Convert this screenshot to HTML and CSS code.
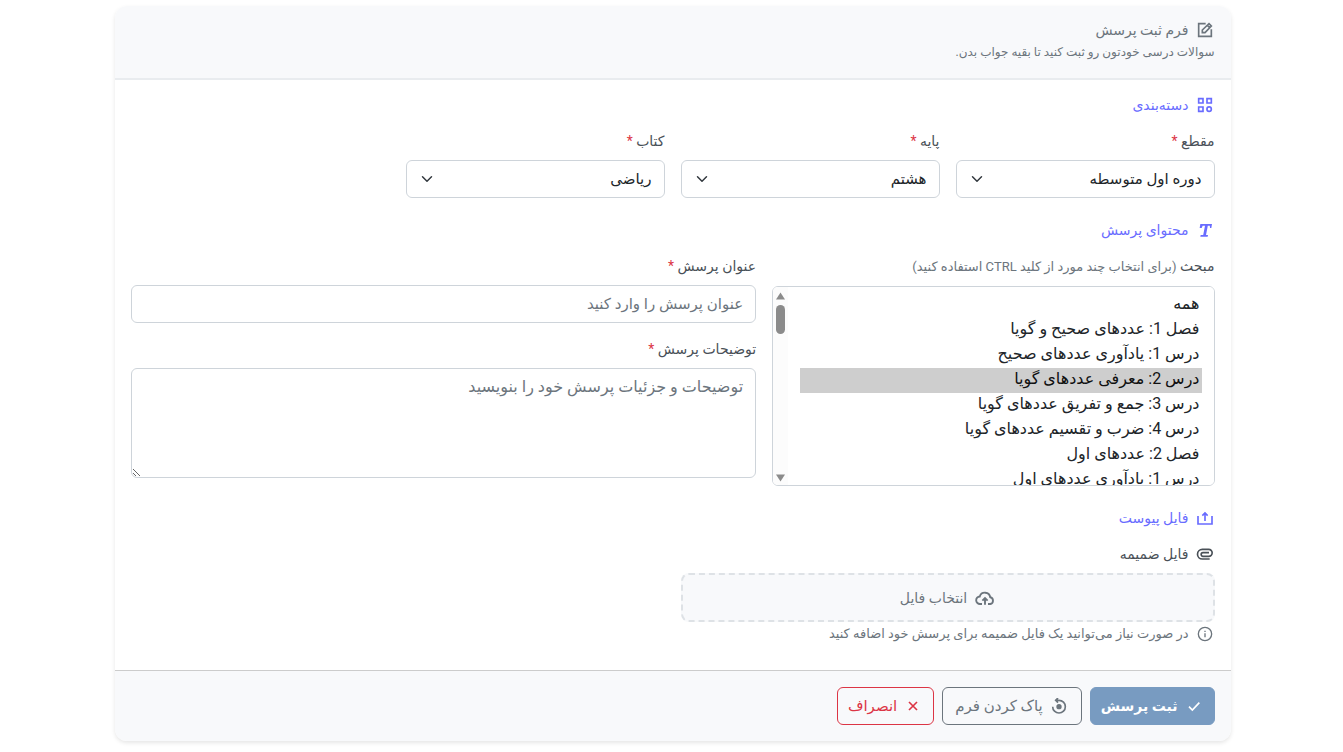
FILE: index.html
```html
<!DOCTYPE html>
<html lang="fa" dir="rtl">
<head>
    <meta charset="UTF-8">
    <meta name="viewport" content="width=device-width, initial-scale=1.0">
    <title>فرم ثبت پرسش</title>
    <link rel="stylesheet" href="styles.css">
</head>
<body>
    <form class="card">
        <header class="card-header">
            <h1 class="title">
                <svg class="icon" viewBox="0 0 24 24"><path d="M13 2.500H2.500v19h19V11M8 16v-4L18 2.500 21.500 6 12 16zM15.500 5l3.500 3.500"/></svg>
                فرم ثبت پرسش
            </h1>
            <p class="subtitle">سوالات درسی خودتون رو ثبت کنید تا بقیه جواب بدن.</p>
        </header>

        <div class="card-body">
            <h2 class="section-title">
                <svg class="icon" viewBox="0 0 24 24"><path d="M2.500 2.500h6.500v6.500H2.500zM15 2.500h6.500v6.500H15zM2.500 15h6.500v6.500H2.500z"/><circle cx="18.200" cy="18.200" r="3.300"/></svg>
                دسته‌بندی
            </h2>
            <div class="row">
                <div class="col-3">
                    <label for="level">مقطع <span class="required">*</span></label>
                    <div class="select-wrap">
                        <select id="level" class="field"><option>دوره اول متوسطه</option></select>
                        <svg class="chevron" viewBox="0 0 16 16"><path d="M2 5l6 6 6-6"/></svg>
                    </div>
                </div>
                <div class="col-3">
                    <label for="grade">پایه <span class="required">*</span></label>
                    <div class="select-wrap">
                        <select id="grade" class="field"><option>هشتم</option></select>
                        <svg class="chevron" viewBox="0 0 16 16"><path d="M2 5l6 6 6-6"/></svg>
                    </div>
                </div>
                <div class="col-3">
                    <label for="book">کتاب <span class="required">*</span></label>
                    <div class="select-wrap">
                        <select id="book" class="field"><option>ریاضی</option></select>
                        <svg class="chevron" viewBox="0 0 16 16"><path d="M2 5l6 6 6-6"/></svg>
                    </div>
                </div>
            </div>

            <h2 class="section-title">
                <svg class="icon" viewBox="0 0 24 24"><path class="solid" d="M5 3h17.500L21.500 9h-2l-.3-3.500h-3L13.500 19.500h3l-.5 2.500H5l.5-2.500h3.800L12 5.500H8.500L7 9H4z"/></svg>
                محتوای پرسش
            </h2>
            <div class="row">
                <div class="col-5">
                    <label for="topics">مبحث <span class="note">(برای انتخاب چند مورد از کلید CTRL استفاده کنید)</span></label>
                    <div class="select-wrap">
                        <select id="topics" class="field topics" multiple>
                            <option>همه</option>
                            <option>فصل 1: عددهای صحیح و گویا</option>
                            <option>درس 1: یادآوری عددهای صحیح</option>
                            <option selected>درس 2: معرفی عددهای گویا</option>
                            <option>درس 3: جمع و تفریق عددهای گویا</option>
                            <option>درس 4: ضرب و تقسیم عددهای گویا</option>
                            <option>فصل 2: عددهای اول</option>
                            <option>درس 1: یادآوری عددهای اول</option>
                        </select>
                        <div class="scrollbar">
                            <svg class="arrow" viewBox="0 0 10 8"><path d="M5 0l5 8H0z"/></svg>
                            <div class="thumb"></div>
                            <svg class="arrow" viewBox="0 0 10 8"><path d="M0 0h10L5 8z"/></svg>
                        </div>
                    </div>
                </div>
                <div class="col-7">
                    <div class="group">
                        <label for="question-title">عنوان پرسش <span class="required">*</span></label>
                        <input type="text" id="question-title" class="field" placeholder="عنوان پرسش را وارد کنید">
                    </div>
                    <div class="group">
                        <label for="details">توضیحات پرسش <span class="required">*</span></label>
                        <textarea id="details" class="field" rows="4" placeholder="توضیحات و جزئیات پرسش خود را بنویسید"></textarea>
                    </div>
                </div>
            </div>

            <h2 class="section-title">
                <svg class="icon" viewBox="0 0 24 24"><path d="M1.500 9v12h21V9M12 16.500V5M8 8.500l4-4 4 4"/></svg>
                فایل پیوست
            </h2>
            <div class="row">
                <div class="col-6">
                    <div class="attach-label">
                        <svg class="icon" viewBox="0 0 24 24"><path d="M19 19.500H8a7 7 0 0 1 0-14.500h9.500a5 5 0 0 1 0 10.500H9a2.700 2.700 0 0 1 0-5.500h9"/></svg>
                        فایل ضمیمه
                    </div>
                    <label class="dropzone" for="attachment">
                        <svg class="icon icon-cloud" viewBox="0 0 24 24"><path d="M8 20H5.500a5 5 0 0 1-.5-10 7.200 7.200 0 0 1 14 1A4.600 4.600 0 0 1 19 20h-3M12 21v-8M8.500 15.500L12 12l3.500 3.500"/></svg>
                        انتخاب فایل
                    </label>
                    <input type="file" id="attachment" class="file-input">
                    <p class="hint">
                        <svg class="icon icon-thin" viewBox="0 0 24 24"><circle cx="12" cy="12" r="10"/><path d="M12 11v6M12 7v2"/></svg>
                        در صورت نیاز می‌توانید یک فایل ضمیمه برای پرسش خود اضافه کنید
                    </p>
                </div>
            </div>
        </div>

        <footer class="card-footer">
            <button type="submit" class="btn btn-submit">
                <svg class="icon" viewBox="0 0 24 24"><path d="M4.500 13l5 5L20 7"/></svg>
                ثبت پرسش
            </button>
            <button type="reset" class="btn btn-reset">
                <svg class="icon" viewBox="0 0 24 24"><path d="M2.500 13a9.500 9.500 0 1 0 9.500-9.500H7M10.500 0L7 3.500l3.500 3.500"/><circle class="solid" cx="12" cy="13" r="4"/></svg>
                پاک کردن فرم
            </button>
            <button type="button" class="btn btn-cancel">
                <svg class="icon" viewBox="0 0 24 24"><path d="M6 6l12 12M18 6L6 18"/></svg>
                انصراف
            </button>
        </footer>
    </form>
</body>
</html>
```
FILE: styles.css
```css
* {
    box-sizing: border-box;
}

body {
    margin: 0;
    padding: 6px 12px 6px 14px;
    font-family: Roboto, "DejaVu Sans", sans-serif;
    font-size: 16px;
    line-height: 24px;
    color: #212529;
    background: #fff;
}

h1,
h2,
p {
    margin: 0;
    font-weight: normal;
}

.card {
    max-width: 1116px;
    margin: 0 auto;
    border-radius: 12px;
    overflow: hidden;
    box-shadow: 0 2px 4px rgba(0, 0, 0, 0.1);
}

.card-header {
    padding: 12px 16px 16px;
    background: #f8f9fb;
    border-bottom: 2px solid #e9ecef;
    color: #6c757d;
}

.title,
.section-title,
.attach-label,
.hint {
    display: flex;
    align-items: center;
    gap: 6px;
    font-size: 14px;
}

.icon {
    width: 20px;
    height: 16px;
    flex: none;
    fill: none;
    stroke: currentColor;
    stroke-width: 2.5;
}

.icon-cloud {
    height: 18px;
}

.icon-thin {
    stroke-width: 2;
}

.solid {
    fill: currentColor;
    stroke: none;
}

.subtitle {
    font-size: 12px;
    line-height: 20px;
}

.card-body {
    padding: 13px 16px 24px;
}

.section-title {
    margin-bottom: 12px;
    color: #696cff;
}

.row {
    display: grid;
    grid-template-columns: repeat(12, 1fr);
    gap: 16px;
    margin-bottom: 20px;
}

.col-3 {
    grid-column: span 3;
}

.col-5 {
    grid-column: span 5;
}

.col-6 {
    grid-column: span 6;
}

.col-7 {
    grid-column: span 7;
}

.row:last-child {
    margin-bottom: 0;
}

label {
    display: block;
    margin-bottom: 7px;
    font-size: 14px;
    line-height: 24px;
    color: #495057;
}

.required {
    color: #dc3545;
}

.note {
    font-size: 13px;
    color: #6c757d;
}

.field {
    display: block;
    width: 100%;
    height: 38px;
    padding: 6px 12px;
    border: 1px solid #ced4da;
    border-radius: 6px;
    background: #fff;
    color: #212529;
    font: inherit;
    appearance: none;
}

.field::placeholder {
    color: #6c757d;
}

select.field,
input.field {
    font-size: 15px;
}

.select-wrap {
    position: relative;
}

.chevron {
    position: absolute;
    left: 15px;
    top: 13px;
    width: 12px;
    height: 12px;
    fill: none;
    stroke: #343a40;
    stroke-width: 2;
    stroke-linecap: round;
    stroke-linejoin: round;
    pointer-events: none;
}

select.topics {
    height: 200px;
    padding-left: 27px;
    font-size: 16px;
    overflow-y: scroll;
    scrollbar-width: none;
}

.topics option {
    height: 25px;
    padding: 1px 2px 0;
    line-height: 25px;
}

/* scrollbar on the left edge of the topics list */
.scrollbar {
    position: absolute;
    left: 1px;
    top: 1px;
    bottom: 1px;
    width: 15px;
    padding: 5px 0 3px;
    display: flex;
    flex-direction: column;
    align-items: center;
    gap: 5px;
    border-radius: 5px 0 0 5px;
    background: #fcfcfc;
    pointer-events: none;
}

.arrow {
    width: 9px;
    height: 8px;
    fill: #8b8b8b;
}

.arrow:last-child {
    margin-top: auto;
}

.thumb {
    width: 9px;
    height: 29px;
    border-radius: 5px;
    background: #8b8b8b;
}

.group {
    margin-bottom: 14px;
}

.group:last-child {
    margin-bottom: 0;
}

textarea.field {
    height: 110px;
    resize: both;
}

.attach-label {
    margin-bottom: 7px;
    color: #495057;
}

.dropzone {
    display: flex;
    align-items: center;
    justify-content: center;
    gap: 8px;
    height: 49px;
    margin: 0;
    border: 2px dashed #dee2e6;
    border-radius: 8px;
    background: #f8f9fb;
    color: #6c757d;
}

.file-input {
    display: none;
}

.hint {
    font-size: 13px;
    color: #6c757d;
}

.card-footer {
    display: flex;
    gap: 8px;
    padding: 16px;
    border-top: 1px solid #ccc;
    background: #f8f9fb;
}

.btn {
    display: flex;
    align-items: center;
    gap: 6px;
    height: 38px;
    padding: 0 12px;
    border: 1px solid;
    border-radius: 6px;
    background: transparent;
    font: inherit;
    font-size: 15px;
    cursor: pointer;
}

.btn-submit {
    padding: 0 10px;
    border-color: #789bc1;
    background: #789bc1;
    color: #fff;
    font-size: 14px;
    font-weight: bold;
}

.btn-reset {
    color: #6c757d;
}

.btn-cancel {
    padding: 0 10px;
    color: #dc3545;
}
```
